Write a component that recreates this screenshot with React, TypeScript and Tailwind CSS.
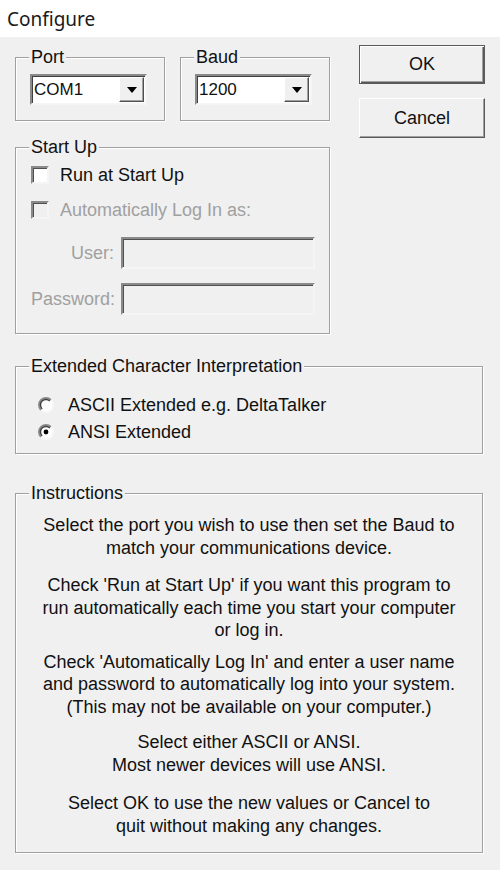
import type { ReactNode } from "react";

const Group = ({
  label,
  className,
  children,
}: {
  label: string;
  className: string;
  children?: ReactNode;
}) => (
  <div
    className={`relative border border-[#a0a0a0] shadow-[inset_1px_1px_0_#ffffff,1px_1px_0_#ffffff] ${className}`}>
    <span className="absolute left-[13px] -top-[11px] bg-[#f0f0f0] px-[2px] leading-[20px]">
      {label}
    </span>
    {children}
  </div>
);

const Combo = ({ value }: { value: string }) => (
  <div className="flex h-[31px] w-[117px] items-center border-2 border-t-[#8a8a8a] border-l-[#8a8a8a] border-r-[#f5f5f5] border-b-[#f5f5f5] bg-white shadow-[inset_1px_1px_0_#404040]">
    <span className="pl-[2px] pt-[1px] text-[17px] leading-[20px]">{value}</span>
    <div className="ml-auto mr-[1px] flex h-[25px] w-[25px] items-center justify-center border border-t-white border-l-white border-r-[#505050] border-b-[#505050] bg-[#f0f0f0] shadow-[inset_-1px_-1px_0_#a0a0a0]">
      <svg width="10" height="6" viewBox="0 0 10 6">
        <path d="M0 0 H10 L5 6 Z" fill="#000" />
      </svg>
    </div>
  </div>
);

const Check = ({ disabled }: { disabled?: boolean }) => (
  <div
    className={`h-[18px] w-[18px] shrink-0 border-2 border-t-[#8a8a8a] border-l-[#8a8a8a] border-r-[#f5f5f5] border-b-[#f5f5f5] shadow-[inset_1px_1px_0_#505050] ${
      disabled ? "bg-[#f0f0f0]" : "bg-white"
    }`}
  />
);

const Radio = ({ checked }: { checked?: boolean }) => (
  <svg width="16" height="16" viewBox="0 0 16 16" className="shrink-0">
    <circle cx="8" cy="8" r="7" fill="#fff" />
    <path d="M3.05 12.95 A7 7 0 0 1 12.95 3.05" stroke="#8a8a8a" strokeWidth="2" fill="none" />
    <path d="M4.1 11.9 A5.5 5.5 0 0 1 11.9 4.1" stroke="#404040" strokeWidth="1.4" fill="none" />
    <path d="M12.95 3.05 A7 7 0 0 1 3.05 12.95" stroke="#f8f8f8" strokeWidth="2" fill="none" />
    {checked && <circle cx="8" cy="8" r="2.4" fill="#000" />}
  </svg>
);

const Field = () => (
  <div className="h-[32px] w-[194px] border-2 border-t-[#8a8a8a] border-l-[#8a8a8a] border-r-[#f5f5f5] border-b-[#f5f5f5] bg-[#f0f0f0] shadow-[inset_1px_1px_0_#505050]" />
);

const App = () => {
  return (
    <div className="flex h-[870px] w-[500px] flex-col bg-[#f0f0f0] font-['Liberation_Sans',Arial,sans-serif] text-[18px] text-[#111]">
      <div className="flex h-[37px] items-center bg-white pl-[7px] font-['Noto_Sans',sans-serif] text-[19px] leading-[24px] text-[#1a1a1a]">
        Configure
      </div>

      <div className="flex flex-col px-[15px]">
        <div className="flex">
          <div className="flex w-[315px] flex-col pt-[20px]">
            <div className="flex gap-[15px]">
              <Group label="Port" className="h-[64px] w-[150px] pl-[14px] pt-[16px]">
                <Combo value="COM1" />
              </Group>
              <Group label="Baud" className="h-[64px] w-[150px] pl-[14px] pt-[16px]">
                <Combo value="1200" />
              </Group>
            </div>

            <Group label="Start Up" className="mt-[26px] h-[187px] w-[315px] pl-[15px] pt-[18px]">
              <div className="flex h-[18px] items-center gap-[11px]">
                <Check />
                <span className="leading-[20px]">Run at Start Up</span>
              </div>
              <div className="mt-[16px] flex h-[19px] items-center gap-[11px]">
                <Check disabled />
                <span className="leading-[20px] text-[#a0a0a0]">Automatically Log In as:</span>
              </div>
              <div className="mt-[18px] flex items-center gap-[7px] text-[#a0a0a0]">
                <span className="w-[83px] text-right">User:</span>
                <Field />
              </div>
              <div className="mt-[14px] flex items-center gap-[7px] text-[#a0a0a0]">
                <span className="w-[83px] text-right">Password:</span>
                <Field />
              </div>
            </Group>
          </div>

          <div className="ml-auto flex w-[126px] flex-col pt-[8px]">
            <button className="flex h-[39px] items-center justify-center border border-[#5a5a5a] bg-[#f0f0f0] shadow-[inset_1px_1px_0_#ffffff,inset_-1px_-1px_0_#5a5a5a,inset_-2px_-2px_0_#a0a0a0]">
              OK
            </button>
            <button className="mt-[14px] flex h-[40px] items-center justify-center border border-t-white border-l-white border-r-[#5a5a5a] border-b-[#5a5a5a] bg-[#f0f0f0] shadow-[inset_-1px_-1px_0_#a0a0a0]">
              Cancel
            </button>
          </div>
        </div>

        <Group
          label="Extended Character Interpretation"
          className="mt-[32px] h-[88px] w-[468px] pl-[22px] pt-[27px]">
          <div className="flex h-[22px] items-center gap-[14px]">
            <Radio />
            <span>ASCII Extended e.g. DeltaTalker</span>
          </div>
          <div className="mt-[5px] flex h-[22px] items-center gap-[14px]">
            <Radio checked />
            <span>ANSI Extended</span>
          </div>
        </Group>

        <Group
          label="Instructions"
          className="mt-[39px] h-[360px] w-[468px] pt-[20px] text-center leading-[22.5px]">
          <p>
            Select the port you wish to use then set the Baud to
            <br />
            match your communications device.
          </p>
          <p className="mt-[15px]">
            Check 'Run at Start Up' if you want this program to
            <br />
            run automatically each time you start your computer
            <br />
            or log in.
          </p>
          <p className="mt-[9px]">
            Check 'Automatically Log In' and enter a user name
            <br />
            and password to automatically log into your system.
            <br />
            (This may not be available on your computer.)
          </p>
          <p className="mt-[13px]">
            Select either ASCII or ANSI.
            <br />
            Most newer devices will use ANSI.
          </p>
          <p className="mt-[16px]">
            Select OK to use the new values or Cancel to
            <br />
            quit without making any changes.
          </p>
        </Group>
      </div>
    </div>
  );
};

export default App;
